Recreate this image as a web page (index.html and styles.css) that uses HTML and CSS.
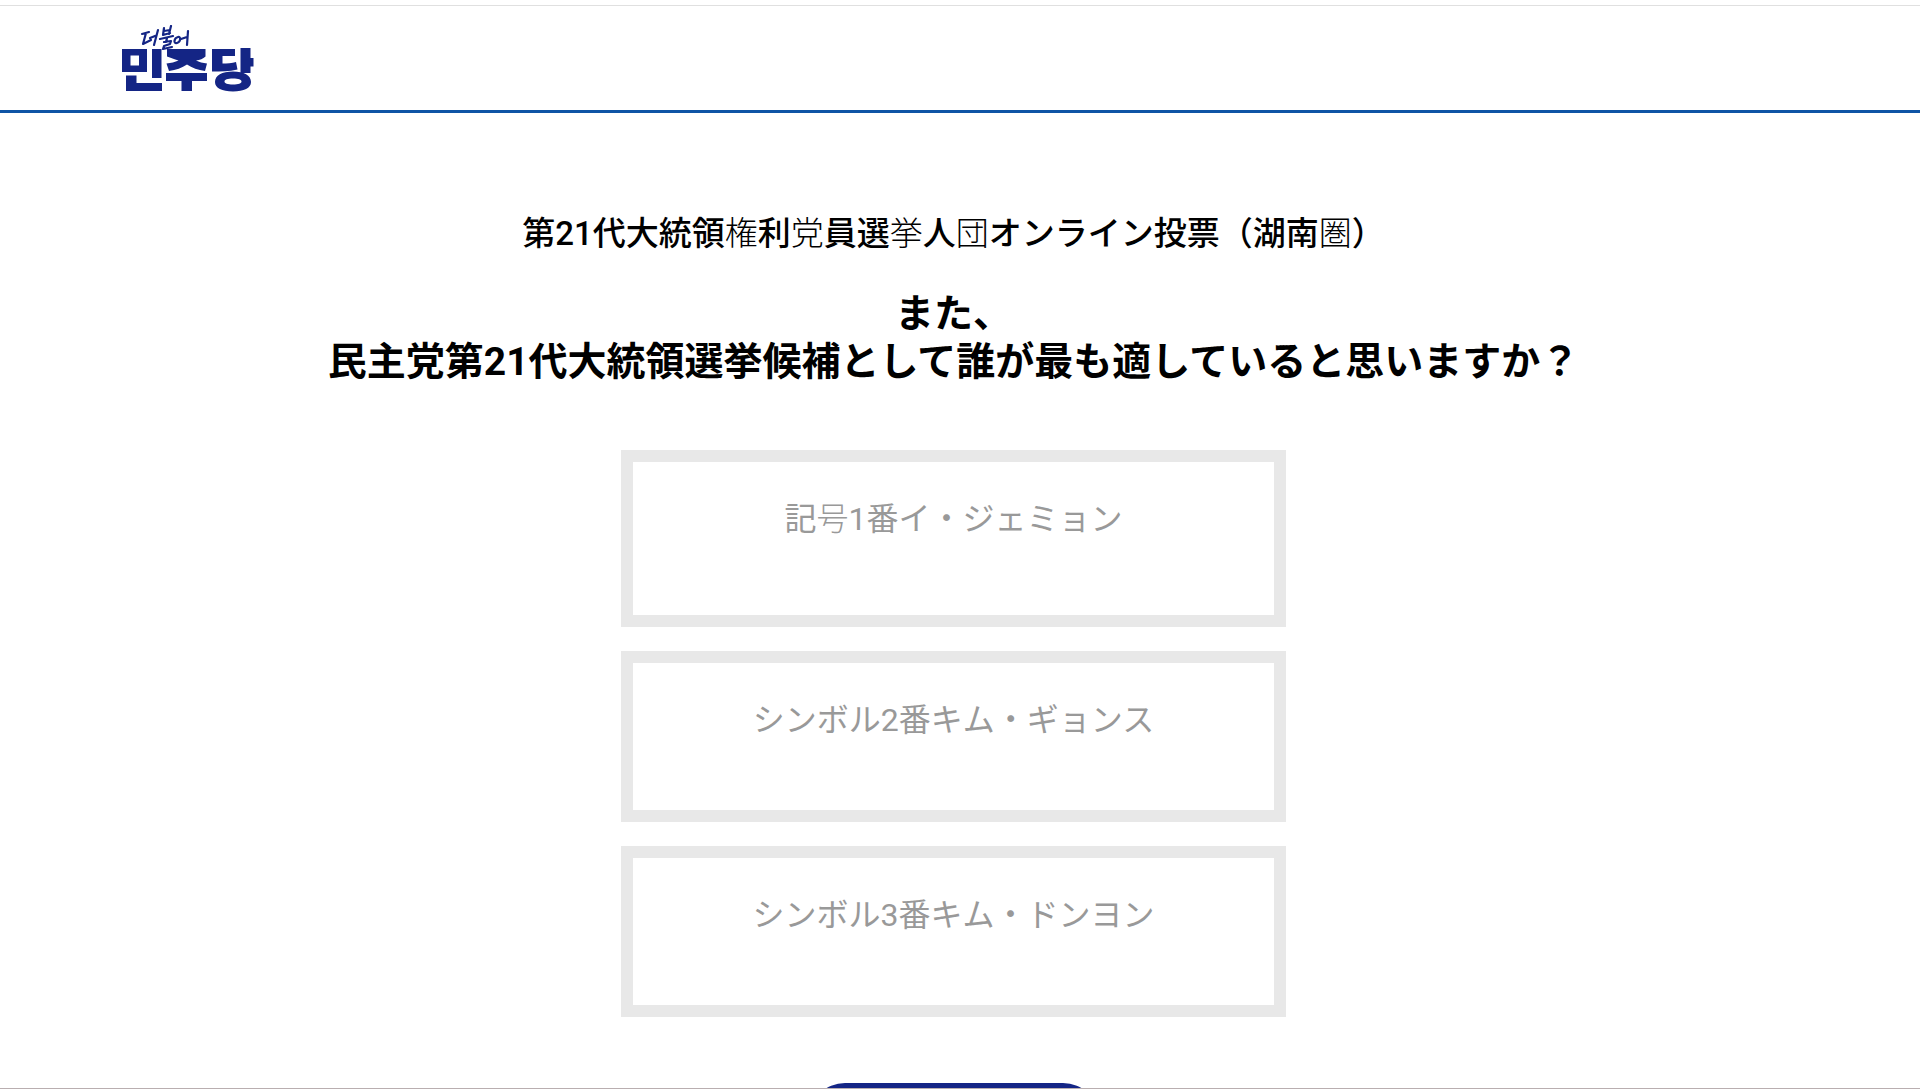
FILE: index.html
```html
<!DOCTYPE html>
<html lang="ja">
<head>
    <meta charset="UTF-8">
    <title>第21代大統領権利党員選挙人団オンライン投票</title>
    <link rel="stylesheet" href="styles.css">
</head>
<body>
    <header class="header">
        <a class="logo" href="#" aria-label="더불어민주당">
            <svg width="134" height="68" viewBox="0 0 134 68">
                <g fill="#142585" fill-rule="evenodd">
                    <!-- 민 -->
                    <path d="M1 24H26V47H1ZM9.500 30.500V40.500H18V30.500Z"/>
                    <path d="M31 24H40.500V53H31Z"/>
                    <path d="M5 50.500H15.500V58H41V66H5Z"/>
                    <!-- 주 -->
                    <path d="M46 24H84.500V31.500C82 34 79 35 75 35.500C78 37 82 38 86 38.500L84 46C77 45 71 43 66 39.500C61 43 55 45 48 46L45.500 38.500C50 38 54 37 57.500 35.500C53 34 50 33 46 31.500Z"/>
                    <path d="M45 48H86V56H71V66H60.500V56H45Z"/>
                    <!-- 당 -->
                    <path d="M91 24H114V31H101.500V38.500C106 38.500 111 38 115 37L116.500 44.500C108 46.500 100 46.500 91 46.500Z"/>
                    <path d="M119.500 23H129.500V33H132.500V41.500H129.500V48H119.500Z"/>
                    <path d="M112 46.500C123 46.500 130 50.500 130 57C130 63 123 66.500 112 66.500C101 66.500 94 63 94 57C94 50.500 101 46.500 112 46.500ZM112 53.500C106.500 53.500 103.500 54.500 103.500 56.500C103.500 58.500 106.500 59.500 112 59.500C117.500 59.500 120.500 58.500 120.500 56.500C120.500 54.500 117.500 53.500 112 53.500Z"/>
                </g>
                <g fill="none" stroke="#142585" stroke-width="2.200" stroke-linecap="round" stroke-linejoin="round">
                    <!-- 더 -->
                    <path d="M21 9L28 7M25 8L22 19L30 15M29 13L34 11M37 5L33 20"/>
                    <!-- 불 -->
                    <path d="M43 3L42 10L49 8M50 1L48 9M43 6L49 5M39 14L52 11M46 13L45 17M43 17L50 16L49 19L43 21L42 24L51 22"/>
                    <!-- 어 -->
                    <path d="M57 12C53 13 52 19 56 18C60 17 60 11 57 12M60 14L66 12M67 6L66 20"/>
                </g>
            </svg>
        </a>
    </header>

    <main class="vote">
        <h1 class="vote-title">第21代大統領<span class="thin">権</span>利<span class="thin">党</span>員選<span class="thin">挙</span>人<span class="thin">団</span>オンライン投票（湖南<span class="thin">圏</span>）</h1>
        <h2 class="question">また、<br>民主党第21代大統領選挙候補として誰が最も適していると思いますか？</h2>

        <div class="choices">
            <button type="button" class="choice first">記<span class="thin">号</span>1番イ・ジェミョン</button>
            <button type="button" class="choice">シンボル2番キム・ギョンス</button>
            <button type="button" class="choice">シンボル3番キム・ドンヨン</button>
        </div>

        <button type="button" class="submit" aria-label="投票"></button>
    </main>
</body>
</html>
```

FILE: styles.css
```css
* {
    margin: 0;
    padding: 0;
    box-sizing: border-box;
}
html {
    height: 100%;
    overflow: hidden;
}
body {
    height: 100%;
    overflow: hidden;
    padding-top: 5px;
    background: #fff;
    border-bottom: 1px solid #b9aeb0;
    color: #000;
    font-family: Roboto, "Noto Sans CJK JP", sans-serif;
}

.header {
    height: 108px;
    padding: 19px 121px;
    border-top: 1px solid #e0e0e0;
    border-bottom: 3px solid #0f54a5;
}
.logo {
    display: inline-block;
}
.logo svg {
    display: block;
}

.vote {
    padding: 97px 13px 0 0;
    text-align: center;
}
.vote-title {
    font-size: 33px;
    font-weight: 500;
    line-height: 48px;
}
.thin {
    font-weight: 300;
}
.question {
    margin-top: 32px;
    font-size: 39px;
    font-weight: 700;
    line-height: 48px;
}

.choices {
    display: flex;
    flex-direction: column;
    align-items: center;
    gap: 24px;
    margin-top: 64px;
}
.choice {
    width: 665px;
    max-width: 100%;
    padding: 33px 12px 66px;
    border: 12px solid #e8e8e8;
    background: #fff;
    color: #999;
    font-family: inherit;
    font-size: 32px;
    font-weight: 400;
    line-height: 48px;
    cursor: pointer;
}
.first {
    padding-bottom: 72px;
}

.submit {
    width: 290px;
    height: 72px;
    margin-top: 66px;
    border: none;
    border-radius: 36px;
    background: #142585;
    cursor: pointer;
}
```
